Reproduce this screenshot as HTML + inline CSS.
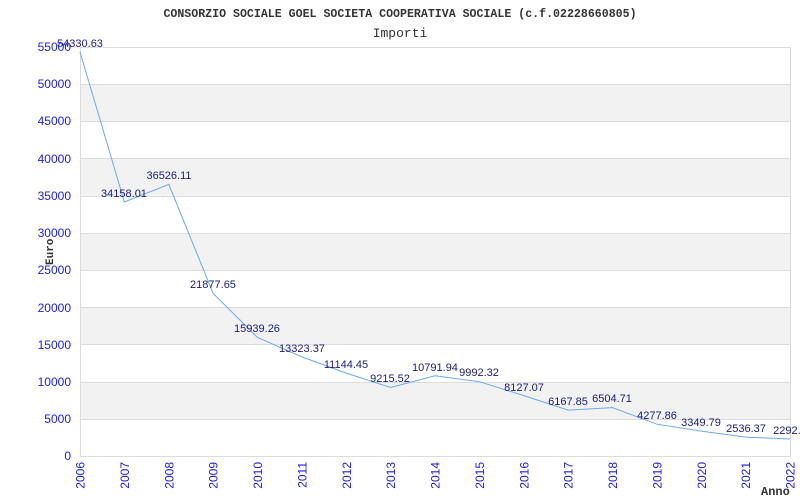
<!DOCTYPE html>
<html><head><meta charset="utf-8"><style>
html,body{margin:0;padding:0;background:#fff;width:800px;height:500px;overflow:hidden}
</style></head><body>
<svg width="800" height="500" xmlns="http://www.w3.org/2000/svg">
<rect width="800" height="500" fill="#fff"/>
<text x="400" y="17" text-anchor="middle" font-family="Liberation Mono, monospace" font-weight="bold" font-size="11.6" fill="#333">CONSORZIO SOCIALE GOEL SOCIETA COOPERATIVA SOCIALE (c.f.02228660805)</text>
<text x="400" y="37" text-anchor="middle" font-family="Liberation Mono, monospace" font-size="13" fill="#333">Importi</text>
<g fill="#f2f2f2">
<rect x="80" y="84.2" width="710" height="37.2"/>
<rect x="80" y="158.6" width="710" height="37.2"/>
<rect x="80" y="233" width="710" height="37.2"/>
<rect x="80" y="307.4" width="710" height="37.2"/>
<rect x="80" y="381.8" width="710" height="37.2"/>
</g>
<g stroke="#dcdcdc" stroke-width="1">
<line x1="80" y1="47.5" x2="790" y2="47.5"/><line x1="80" y1="84.5" x2="790" y2="84.5"/>
<line x1="80" y1="121.5" x2="790" y2="121.5"/><line x1="80" y1="158.5" x2="790" y2="158.5"/>
<line x1="80" y1="196.5" x2="790" y2="196.5"/><line x1="80" y1="233.5" x2="790" y2="233.5"/>
<line x1="80" y1="270.5" x2="790" y2="270.5"/><line x1="80" y1="307.5" x2="790" y2="307.5"/>
<line x1="80" y1="344.5" x2="790" y2="344.5"/><line x1="80" y1="382.5" x2="790" y2="382.5"/>
<line x1="80" y1="419.5" x2="790" y2="419.5"/>
<line x1="80.5" y1="47" x2="80.5" y2="456"/><line x1="790.5" y1="47" x2="790.5" y2="456"/>
<line x1="80" y1="456.5" x2="791" y2="456.5"/>
</g>
<g font-family="Liberation Sans, sans-serif" font-size="12" fill="#1a1aff" text-anchor="end">
<text x="71" y="51">55000</text><text x="71" y="88">50000</text><text x="71" y="125">45000</text>
<text x="71" y="163">40000</text><text x="71" y="200">35000</text><text x="71" y="237">30000</text>
<text x="71" y="274">25000</text><text x="71" y="312">20000</text><text x="71" y="349">15000</text>
<text x="71" y="386">10000</text><text x="71" y="423">5000</text><text x="71" y="460">0</text>
</g>
<g font-family="Liberation Sans, sans-serif" font-size="12" fill="#1a1aff" text-anchor="end">
<text transform="translate(84.5,462) rotate(-90)">2006</text>
<text transform="translate(128.9,462) rotate(-90)">2007</text>
<text transform="translate(173.3,462) rotate(-90)">2008</text>
<text transform="translate(217.6,462) rotate(-90)">2009</text>
<text transform="translate(262,462) rotate(-90)">2010</text>
<text transform="translate(306.4,462) rotate(-90)">2011</text>
<text transform="translate(350.8,462) rotate(-90)">2012</text>
<text transform="translate(395.1,462) rotate(-90)">2013</text>
<text transform="translate(439.5,462) rotate(-90)">2014</text>
<text transform="translate(483.9,462) rotate(-90)">2015</text>
<text transform="translate(528.3,462) rotate(-90)">2016</text>
<text transform="translate(572.6,462) rotate(-90)">2017</text>
<text transform="translate(617,462) rotate(-90)">2018</text>
<text transform="translate(661.4,462) rotate(-90)">2019</text>
<text transform="translate(705.8,462) rotate(-90)">2020</text>
<text transform="translate(750.1,462) rotate(-90)">2021</text>
<text transform="translate(794.5,462) rotate(-90)">2022</text>
</g>
<text transform="translate(53,265) rotate(-90)" font-family="Liberation Mono, monospace" font-weight="bold" font-size="11" fill="#333">Euro</text>
<text x="761" y="495" font-family="Liberation Mono, monospace" font-weight="bold" font-size="12" fill="#333">Anno</text>
<polyline fill="none" stroke="#6aaaf0" stroke-width="1" points="80,52 124.4,202 168.8,184.4 213.1,293.3 257.5,337.5 301.9,356.9 346.3,373.1 390.6,387.5 435,375.8 479.4,381.7 523.8,395.6 568.1,410.1 612.5,407.6 656.9,424.2 701.3,431.1 745.6,437.1 790,439"/>
<g font-family="Liberation Sans, sans-serif" font-size="11" fill="#1a1a80" text-anchor="middle">
<text x="80" y="47">54330.63</text><text x="124" y="197">34158.01</text><text x="169" y="179">36526.11</text>
<text x="213" y="288">21877.65</text><text x="257" y="332">15939.26</text><text x="302" y="352">13323.37</text>
<text x="346" y="368">11144.45</text><text x="390" y="382">9215.52</text><text x="435" y="371">10791.94</text>
<text x="479" y="376">9992.32</text><text x="524" y="391">8127.07</text><text x="568" y="405">6167.85</text>
<text x="612" y="402">6504.71</text><text x="657" y="419">4277.86</text><text x="701" y="426">3349.79</text>
<text x="746" y="432">2536.37</text><text x="790" y="434">2292.7</text>
</g>
</svg>
</body></html>
